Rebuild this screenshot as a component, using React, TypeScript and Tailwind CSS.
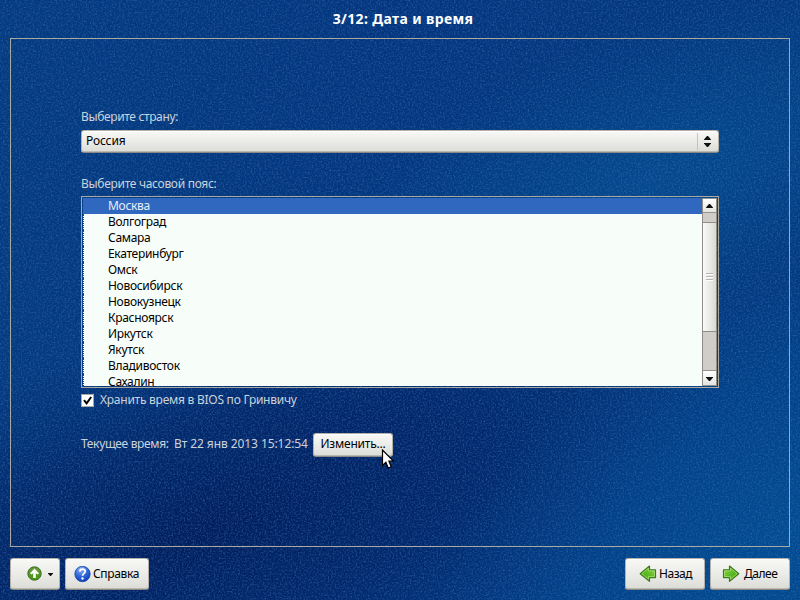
import type { ReactNode } from "react";

const cities = [
  "Москва", "Волгоград", "Самара", "Екатеринбург", "Омск", "Новосибирск",
  "Новокузнецк", "Красноярск", "Иркутск", "Якутск", "Владивосток", "Сахалин",
];

const raised =
  "rounded-[3px] border border-[#b5b1aa] border-b-[#8b8984] bg-linear-to-b from-[#f8f8f6] via-[#ebebe8] to-[#dcdcd7] shadow-[inset_0_1px_0_#fff,inset_0_-1px_0_#b9b8b1]";

function Wallpaper() {
  return (
    <svg className="absolute inset-0" width="800" height="600">
      <defs>
        <linearGradient id="base" x1="0" y1="0" x2="1" y2="0">
          <stop offset="0" stopColor="#033a80" />
          <stop offset=".5" stopColor="#02357e" />
          <stop offset="1" stopColor="#02387e" />
        </linearGradient>
        <radialGradient id="dark" gradientUnits="userSpaceOnUse" cx="0" cy="0" r="1" gradientTransform="translate(200 530) rotate(-18) scale(560 210)">
          <stop offset="0" stopColor="#001450" stopOpacity=".75" />
          <stop offset=".5" stopColor="#001b5c" stopOpacity=".52" />
          <stop offset="1" stopColor="#002468" stopOpacity="0" />
        </radialGradient>
        <radialGradient id="glow" gradientUnits="userSpaceOnUse" cx="0" cy="0" r="1" gradientTransform="translate(650 180) rotate(-20) scale(380 150)">
          <stop offset="0" stopColor="#055a9c" stopOpacity=".5" />
          <stop offset=".5" stopColor="#055a9c" stopOpacity=".25" />
          <stop offset="1" stopColor="#055a9c" stopOpacity="0" />
        </radialGradient>
        <radialGradient id="corner" gradientUnits="userSpaceOnUse" cx="0" cy="0" r="1" gradientTransform="translate(780 540) rotate(-38) scale(420 250)">
          <stop offset="0" stopColor="#00529a" stopOpacity=".75" />
          <stop offset=".5" stopColor="#00529a" stopOpacity=".42" />
          <stop offset="1" stopColor="#00529a" stopOpacity="0" />
        </radialGradient>
        <filter id="grain" x="0" y="0" width="100%" height="100%" colorInterpolationFilters="sRGB">
          <feTurbulence type="fractalNoise" baseFrequency=".57" numOctaves="3" seed="4" />
          <feGaussianBlur stdDeviation=".7" />
          <feColorMatrix values="0 0 0 0 .25  0 0 0 0 .45  0 0 0 0 .68  2.4 0 0 0 -1.02" />
        </filter>
      </defs>
      <rect width="800" height="600" fill="url(#base)" />
      <rect width="800" height="600" fill="url(#dark)" />
      <rect width="800" height="600" fill="url(#glow)" />
      <rect width="800" height="600" fill="url(#corner)" />
      <rect width="800" height="600" filter="url(#grain)" opacity=".5" />
    </svg>
  );
}

function Button({ className, children }: { className: string; children: ReactNode }) {
  return <button className={`flex shrink-0 items-center text-black ${raised} ${className}`}>{children}</button>;
}

function Triangle({ up = false, small = false }: { up?: boolean; small?: boolean }) {
  return (
    <svg width={small ? 5 : 7} height={small ? 3 : 4} viewBox="0 0 8 4" preserveAspectRatio="none">
      <path d={up ? "M3.4 0H4.6L8 3.4V4H0V3.4Z" : "M0 0H8V.6L4.6 4H3.4L0 .6Z"} fill="#111" />
    </svg>
  );
}

function UpIcon() {
  return (
    <svg width="16" height="16" viewBox="0 0 16 16">
      <defs>
        <linearGradient id="green" x1="0" y1="0" x2="0" y2="1">
          <stop stopColor="#66983f" /><stop offset="1" stopColor="#459713" />
        </linearGradient>
      </defs>
      <circle cx="7.5" cy="7.5" r="6.7" fill="url(#green)" stroke="#3b701c" />
      <path d="M7.5 2.6L12 7.2L10.6 8.6L8.8 7.2V12H6.2V7.2L4.4 8.6L3 7.2Z" fill="#fff" />
    </svg>
  );
}

function HelpIcon() {
  return (
    <svg width="17" height="17" viewBox="0 0 17 17">
      <defs>
        <radialGradient id="blue" cx=".4" cy=".2" r=".85">
          <stop stopColor="#8fb5f4" /><stop offset=".5" stopColor="#356cd9" /><stop offset="1" stopColor="#0737b5" />
        </radialGradient>
      </defs>
      <circle cx="8.5" cy="8" r="7.7" fill="url(#blue)" stroke="#1747ad" strokeWidth=".8" />
      <path d="M5.8 5.6C6 2.3 11.4 2.4 11.2 5.5C11.1 7.5 8.6 7.3 8.6 9.8" fill="none" stroke="#fff" strokeWidth="1.8" />
      <circle cx="8.5" cy="12.5" r="1.2" fill="#fff" />
    </svg>
  );
}

function ArrowIcon({ left = false }: { left?: boolean }) {
  return (
    <svg width="18" height="18" viewBox="0 0 18 18" className={left ? "shrink-0 -scale-x-100" : "shrink-0"}>
      <defs>
        <linearGradient id="lime" x1="0" y1="0" x2="1" y2="1">
          <stop stopColor="#a2d56c" /><stop offset=".45" stopColor="#62bd28" /><stop offset="1" stopColor="#36a800" />
        </linearGradient>
      </defs>
      <path d="M1.5 4.8H7.5V1L16.8 8.7L7.5 16.3V12.6H1.5Z" fill="url(#lime)" stroke="#397a1c" strokeWidth="1.2" strokeLinejoin="round" />
      <path d="M2.5 5.8H8.5V3.1L15.2 8.7L8.5 14.2V11.6H2.5Z" fill="none" stroke="#a4df72" strokeWidth=".8" />
    </svg>
  );
}

function Scrollbar() {
  return (
    <div className="flex w-[15px] flex-col border-x border-[#8f8d88] bg-[#d0ccc8]">
      <div className="flex h-[15px] items-center justify-center border-y border-[#94928e] bg-linear-to-b from-white to-[#e3e3df]"><Triangle up /></div>
      <div className="h-[9px]" />
      <div className="flex h-[110px] flex-col items-center justify-center gap-px border-y border-[#8f8d88] bg-linear-to-r from-[#fafaf8] to-[#d9d9d4]">
        {[0, 1, 2].map((i) => <div key={i} className="h-[2px] w-[7px] border-b border-white bg-[#b6b5b1]" />)}
      </div>
      <div className="grow" />
      <div className="flex h-[16px] items-center justify-center border-y border-[#94928e] bg-linear-to-b from-white to-[#e3e3df] pt-px"><Triangle /></div>
    </div>
  );
}

export default function App() {
  return (
    <div className="relative h-[600px] w-[800px] overflow-hidden bg-[#053680] font-['Noto_Sans',sans-serif] text-[12px] leading-4 text-[#c9d3dc]">
      <Wallpaper />
      <div className="relative flex h-full flex-col px-[10px]">
        <h1 className="flex h-[38px] shrink-0 items-center justify-center pl-[6px] text-[14px] font-bold tracking-[0.36px] text-white">3/12: Дата и время</h1>

        <main className="flex h-[509px] shrink-0 flex-col border border-[#aaa9a1] px-[70px] pt-[70px]">
          <div className="h-4 tracking-[-0.36px]">Выберите страну:</div>
          <div className={`mt-[5px] flex h-[23px] shrink-0 items-center justify-between pl-1 text-black ${raised}`}>
            <span className="-mt-px tracking-[-0.15px]">Россия</span>
            <span className="flex h-[17px] w-[21px] flex-col items-center justify-center gap-[3px] border-l border-[#c3c2bd] pr-px">
              <Triangle up /><Triangle />
            </span>
          </div>

          <div className="mt-[23px] h-4 tracking-[-0.3px]">Выберите часовой пояс:</div>
          <div className="mt-1 flex h-[192px] shrink-0 border border-[#aaa9a1] p-px">
            <ul className="grow overflow-hidden bg-[#f7fdf9] tracking-[-0.3px] text-black">
              {cities.map((city, i) => (
                <li key={city} className={i === 0 ? "h-4 bg-[#3068c0] pl-[25px] text-[#e8eef8]" : "h-4 border-l border-dotted border-[#33435c] pl-[24px]"}>{city}</li>
              ))}
            </ul>
            <Scrollbar />
          </div>

          <label className="mt-1 flex h-4 items-center gap-[6px] tracking-[-0.25px]">
            <span className="flex size-[13px] items-center justify-center border border-[#aaa9a1] bg-white">
              <svg width="11" height="11" viewBox="0 0 11 11"><path d="M2 5.2L4.6 8.4L9.2 2" fill="none" stroke="#000" strokeWidth="2" /></svg>
            </span>
            Хранить время в BIOS по Гринвичу
          </label>

          <div className="mt-[25px] flex h-6 items-center">
            <span className="w-[93px] -translate-y-px tracking-[-0.34px]">Текущее время:</span>
            <span className="w-[139px] -translate-y-px tracking-[-0.08px]">Вт 22 янв 2013 15:12:54</span>
            <Button className="h-6 w-20 justify-center pb-[2px] tracking-[-0.2px]">Изменить...</Button>
          </div>
        </main>

        <footer className="mt-[11px] flex h-8 gap-[5px]">
          <Button className="w-[50px] pl-4"><UpIcon /><span className="ml-[5px]"><Triangle small /></span></Button>
          <Button className="w-[84px] gap-[2px] pl-2 tracking-[-0.35px]"><HelpIcon />Справка</Button>
          <div className="grow" />
          <Button className="w-20 gap-[2px] pl-[13px] tracking-[-0.45px]"><ArrowIcon left />Назад</Button>
          <Button className="w-20 gap-[4px] pl-[11px] tracking-[-0.45px]"><ArrowIcon />Далее</Button>
        </footer>
      </div>
      <svg className="absolute left-[381px] top-[449px]" width="14" height="21" viewBox="0 0 14 21">
        <path d="M1.5 1V16.5L4.9 13.3L7.2 19L10.2 17.7L7.9 12.2H12.4Z" fill="#fff" stroke="#000" strokeWidth="1.2" />
      </svg>
    </div>
  );
}
